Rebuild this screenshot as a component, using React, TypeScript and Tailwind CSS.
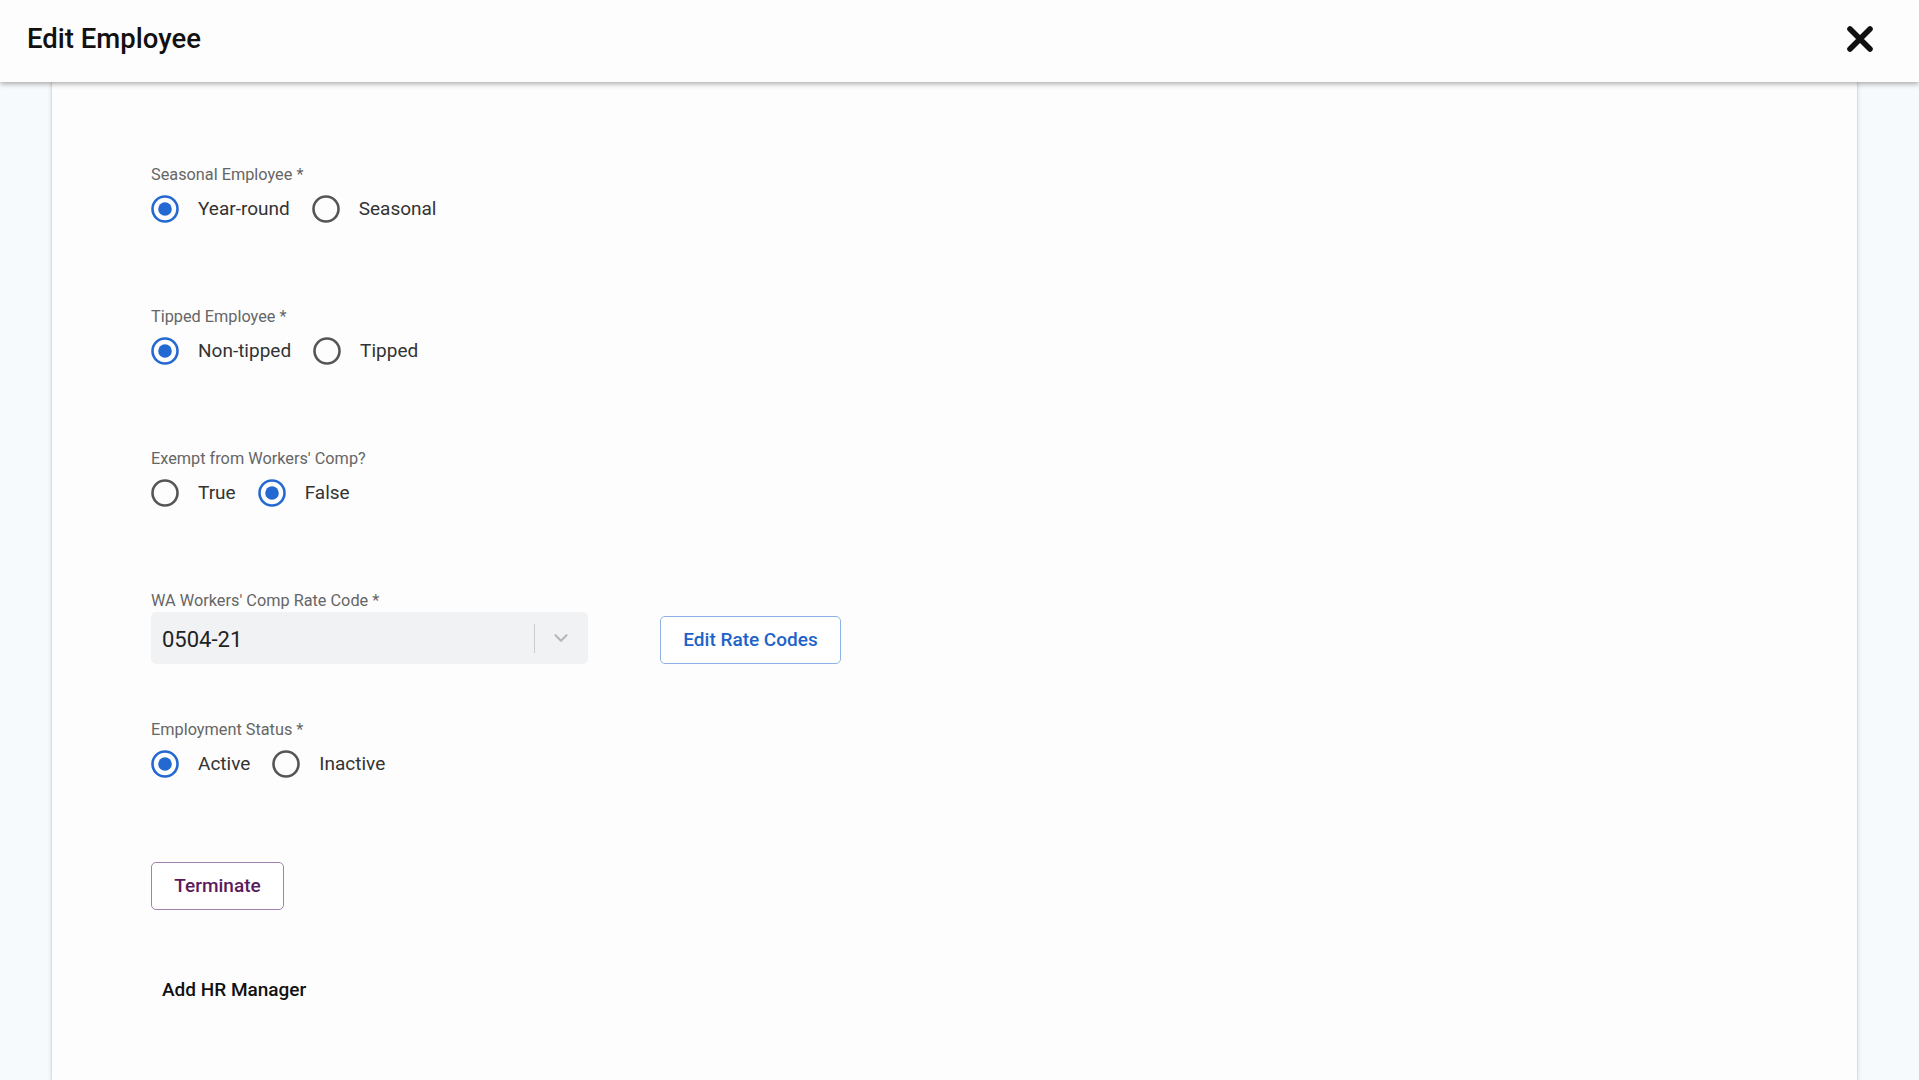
import { ChevronDown } from "lucide-react";

type Option = { label: string; checked?: boolean };

function Radio({ checked }: { checked?: boolean }) {
  return (
    <svg width="28" height="28" viewBox="0 0 28 28" className="shrink-0">
      <circle
        cx="14"
        cy="14"
        r="12.5"
        fill="none"
        stroke={checked ? "#2468d2" : "#555555"}
        strokeWidth="2.6"
      />
      {checked && <circle cx="14" cy="14" r="6.8" fill="#2468d2" />}
    </svg>
  );
}

function FieldLabel({ children }: { children: React.ReactNode }) {
  return (
    <div className="h-[20px] text-[16.3px] leading-[20px] text-[#666666]">
      {children}
    </div>
  );
}

function RadioGroup({ label, options, className = "" }: { label: string; options: Option[]; className?: string }) {
  return (
    <div className={className}>
      <FieldLabel>{label}</FieldLabel>
      <div className="mt-[10px] flex h-[28px] items-center">
        {options.map((o) => (
          <div key={o.label} className="mr-[22px] flex items-center">
            <Radio checked={o.checked} />
            <span className="ml-[19px] text-[19px] leading-[28px] text-[#333333]">{o.label}</span>
          </div>
        ))}
      </div>
    </div>
  );
}

export default function App() {
  return (
    <div
      className="flex h-[1080px] flex-col overflow-hidden bg-[#f7fafd]"
      style={{ fontFamily: "Roboto, 'Noto Sans', sans-serif" }}
    >
      <header className="relative z-10 flex h-[82px] shrink-0 items-center justify-between bg-[#fdfdfd] pb-[5px] pl-[27px] pr-[43px] shadow-[0_2px_5px_rgba(0,0,0,0.32)]">
        <h1 className="text-[27.5px] font-medium text-[#111111]">Edit Employee</h1>
        <svg width="32" height="32" viewBox="0 0 32 32">
          <path d="M6 6 L26 26 M26 6 L6 26" stroke="#111111" strokeWidth="5.6" strokeLinecap="round" />
        </svg>
      </header>

      <main className="ml-[51px] mr-[61px] flex-1 border-x border-[#dcdcdc] bg-[#fdfdfd] pl-[99px] pt-[83px] shadow-[0_0_4px_rgba(0,0,0,0.12)]">
        <RadioGroup
          label="Seasonal Employee *"
          options={[{ label: "Year-round", checked: true }, { label: "Seasonal" }]}
        />
        <RadioGroup
          className="mt-[84px]"
          label="Tipped Employee *"
          options={[{ label: "Non-tipped", checked: true }, { label: "Tipped" }]}
        />
        <RadioGroup
          className="mt-[84px]"
          label="Exempt from Workers' Comp?"
          options={[{ label: "True" }, { label: "False", checked: true }]}
        />

        <div className="mt-[84px]">
          <FieldLabel>WA Workers' Comp Rate Code *</FieldLabel>
          <div className="mt-px flex items-end">
            <div className="flex h-[52px] w-[437px] items-center rounded-[5px] bg-[#f1f2f4] pl-[11px] pr-[16px]">
              <span className="flex-1 pt-[2px] text-[22px] text-[#222222]">0504-21</span>
              <div className="h-[29px] w-px bg-[#cccccc]" />
              <ChevronDown className="ml-[15px]" size={22} strokeWidth={2.4} color="#b8b8b8" />
            </div>
            <button className="ml-[72px] h-[48px] w-[181px] rounded-[5px] border border-[#8fb2e6] bg-white text-[19px] font-medium text-[#1d63c9]">
              Edit Rate Codes
            </button>
          </div>
        </div>

        <RadioGroup
          className="mt-[56px]"
          label="Employment Status *"
          options={[{ label: "Active", checked: true }, { label: "Inactive" }]}
        />

        <button className="mt-[84px] h-[48px] w-[133px] rounded-[5px] border border-[#a57fae] bg-white text-[19px] font-medium text-[#5a1a5c]">
          Terminate
        </button>

        <div className="mt-[68px] pl-[11px] text-[19px] font-medium leading-[24px] text-[#111111]">
          Add HR Manager
        </div>
      </main>
    </div>
  );
}
